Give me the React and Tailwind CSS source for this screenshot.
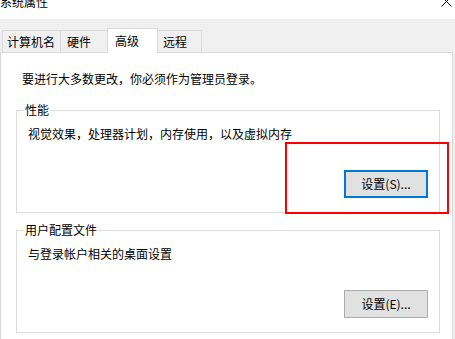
const FONT = { fontFamily: '"Noto Sans CJK SC", "Noto Sans", sans-serif' }

const TABS = [
  { label: '计算机名', w: 'w-[58px]', pl: 'pl-[4px]' },
  { label: '硬件', w: 'w-[47px]', pl: 'pl-[6px]' },
  { label: '高级', w: 'w-[51px]', pl: 'pl-[7px]', active: true },
  { label: '远程', w: 'w-[45px]', pl: 'pl-[5px]' },
]

function GroupBox({ title, text, button, focused }) {
  return (
    <fieldset className="ml-[15px] w-[424px] h-[111px] border border-[#dcdcdc] px-0 pb-0">
      <legend className="ml-[7px] px-[1px] leading-[16px] text-[12px]">{title}</legend>
      <p className="pl-[11px] pt-[8px] leading-[16px] text-[12px]">{text}</p>
      <div className="flex justify-end pr-[11px] mt-[28px]">
        <button
          className={`w-[84px] h-[28px] bg-[#e1e1e1] text-[12px] leading-[16px] ${
            focused ? 'border-2 border-[#0078d7]' : 'border border-[#adadad]'
          }`}
        >
          {button}
        </button>
      </div>
    </fieldset>
  )
}

export default function App() {
  return (
    <div className="relative w-[455px] h-[339px] overflow-hidden bg-[#f0f0f0] text-black" style={FONT}>
      {/* Title bar */}
      <div className="h-[19px] bg-white flex justify-between items-start">
        <span className="-mt-[6px] text-[12px] leading-[16px]">系统属性</span>
        <svg width="11" height="11" viewBox="0 0 11 11" className="-mt-[4px] mr-[3px]">
          <path d="M0.5 0.5 L10.5 10.5 M10.5 0.5 L0.5 10.5" stroke="#000" strokeWidth="1" />
        </svg>
      </div>

      {/* Tabs */}
      <div className="h-[33px] flex items-end pl-[2px]">
        {TABS.map((tab) => (
          <div
            key={tab.label}
            className={`${tab.w} ${tab.pl} text-[12px] leading-[16px] flex items-center border-[#d9d9d9] border-t border-l ${
              tab.active
                ? 'h-[25px] bg-white border-r relative z-10 -mb-px -mr-px'
                : 'h-[22px] last:border-r'
            }`}
          >
            {tab.label}
          </div>
        ))}
      </div>

      {/* Panel */}
      <div className="w-[453px] h-[300px] bg-white border border-[#d9d9d9]">
        <p className="pl-[21px] pt-[18px] text-[12px] leading-[16px]">
          要进行大多数更改，你必须作为管理员登录。
        </p>
        <div className="mt-[15px]">
          <GroupBox title="性能" text="视觉效果，处理器计划，内存使用，以及虚拟内存" button="设置(S)..." focused />
        </div>
        <div className="mt-[9px]">
          <GroupBox title="用户配置文件" text="与登录帐户相关的桌面设置" button="设置(E)..." />
        </div>
      </div>

      {/* Red highlight annotation */}
      <div className="absolute left-[285px] top-[142px] w-[164px] h-[72px] border-2 border-[#ff0000]" />
    </div>
  )
}
